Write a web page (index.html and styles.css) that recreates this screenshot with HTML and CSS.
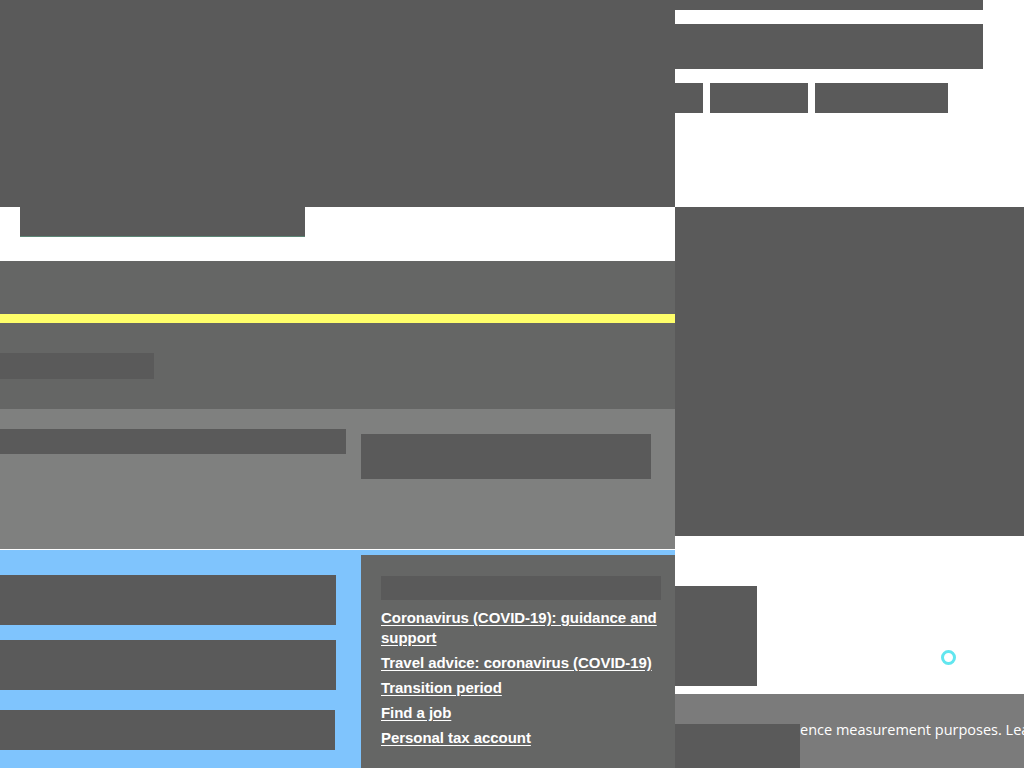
FILE: index.html
```html
<!DOCTYPE html>
<html lang="en">
<head>
<meta charset="utf-8">
<title>Page</title>
<link rel="stylesheet" href="styles.css">
</head>
<body>
<div class="page">
  <div class="main">
    <div class="hero"></div>
    <div class="hero-foot"><div class="hero-tab"></div></div>
    <div class="band">
      <div class="stripe"></div>
      <div class="band-block"></div>
    </div>
    <div class="light">
      <div class="light-left"></div>
      <div class="light-right"></div>
    </div>
    <div class="blue">
      <div class="blue-list">
        <div class="blue-item tall"></div>
        <div class="blue-item tall"></div>
        <div class="blue-item short"></div>
      </div>
      <div class="popular">
        <div class="popular-head"></div>
        <ul class="links">
          <li><a href="#">Coronavirus (COVID-19): guidance and support</a></li>
          <li><a href="#">Travel advice: coronavirus (COVID-19)</a></li>
          <li><a href="#">Transition period</a></li>
          <li><a href="#">Find a job</a></li>
          <li><a href="#">Personal tax account</a></li>
        </ul>
      </div>
    </div>
  </div>
  <div class="side">
    <div class="side-top">
      <div class="bar thin"></div>
      <div class="bar thick"></div>
      <div class="buttons">
        <div class="btn b1"></div>
        <div class="btn b2"></div>
        <div class="btn b3"></div>
      </div>
    </div>
    <div class="side-dark"></div>
    <div class="side-mid">
      <div class="side-square"></div>
      <div class="ring"></div>
    </div>
    <div class="cookie">
      <div class="cookie-row">
        <div class="cookie-block"></div>
        <p class="cookie-text">ence measurement purposes. Learn more</p>
      </div>
    </div>
  </div>
</div>
</body>
</html>
```

FILE: styles.css
```css
html, body {
  margin: 0;
  padding: 0;
  background: #ffffff;
}
.page {
  width: 1024px;
  height: 768px;
  overflow: hidden;
  display: grid;
  grid-template-columns: 675px 349px;
  font-family: "Liberation Sans", Arial, sans-serif;
}
.main {
  display: flex;
  flex-direction: column;
}
.hero {
  height: 207px;
  background: #5a5a5a;
}
.hero-foot {
  height: 54px;
  padding-left: 20px;
}
.hero-tab {
  width: 285px;
  height: 29px;
  background: #5a5a5a;
  border-bottom: 1px solid #5d8676;
}
.band {
  background: #656665;
  padding-top: 53px;
  padding-bottom: 30px;
}
.stripe {
  height: 9px;
  background: #ffff6a;
}
.band-block {
  margin-top: 30px;
  width: 154px;
  height: 26px;
  background: #5a5a5a;
}
.light {
  height: 140px;
  background: #7f807f;
  border-bottom: 1px solid #ffffff;
  display: flex;
  gap: 15px;
  align-items: flex-start;
}
.light-left {
  margin-top: 20px;
  width: 346px;
  height: 25px;
  background: #5a5a5a;
}
.light-right {
  margin-top: 25px;
  width: 290px;
  height: 45px;
  background: #5a5a5a;
}
.blue {
  flex: 1;
  background: #7fc4fd;
  display: flex;
  gap: 25px;
  padding-top: 5px;
}
.blue-list {
  width: 336px;
  padding-top: 20px;
  display: flex;
  flex-direction: column;
}
.blue-item {
  background: #5a5a5a;
}
.blue-item.tall {
  height: 50px;
  margin-bottom: 15px;
}
.blue-item.tall + .blue-item.tall {
  margin-bottom: 20px;
}
.blue-item.short {
  height: 40px;
  width: 335px;
}
.popular {
  flex: 1;
  background: #656665;
  padding: 21px 12px 0 20px;
}
.popular-head {
  height: 24px;
  width: 280px;
  background: #5a5a5a;
  margin-bottom: 8px;
}
.links {
  list-style: none;
  margin: 0;
  padding: 0;
}
.links li {
  margin-bottom: 5px;
  font-size: 15px;
  line-height: 20px;
  font-weight: 700;
  letter-spacing: -0.05px;
}
.links a {
  color: #ffffff;
  text-decoration: underline;
  text-underline-offset: 2px;
}
.side {
  display: flex;
  flex-direction: column;
}
.side-top {
  height: 207px;
}
.bar {
  width: 308px;
  background: #5a5a5a;
}
.bar.thin {
  height: 10px;
  margin-bottom: 14px;
}
.bar.thick {
  height: 45px;
  margin-bottom: 14px;
}
.buttons {
  display: flex;
  gap: 7px;
}
.btn {
  height: 30px;
  background: #5a5a5a;
}
.b1 { width: 28px; }
.b2 { width: 98px; }
.b3 { width: 133px; }
.side-dark {
  height: 329px;
  background: #5a5a5a;
}
.side-mid {
  height: 158px;
  position: relative;
}
.side-square {
  margin-top: 50px;
  width: 82px;
  height: 100px;
  background: #5a5a5a;
}
.ring {
  position: absolute;
  left: 266px;
  top: 114px;
  width: 9px;
  height: 9px;
  border: 3px solid #62e6ef;
  border-radius: 50%;
}
.cookie {
  flex: 1;
  background: #7b7b7b;
  padding-top: 30px;
}
.cookie-row {
  display: flex;
  align-items: flex-start;
  overflow: hidden;
}
.cookie-block {
  flex: 0 0 125px;
  height: 44px;
  background: #5a5a5a;
}
.cookie-text {
  margin: 0;
  color: #ffffff;
  font-family: "Open Sans", sans-serif;
  font-size: 14.5px;
  line-height: 12px;
  white-space: nowrap;
}
```
